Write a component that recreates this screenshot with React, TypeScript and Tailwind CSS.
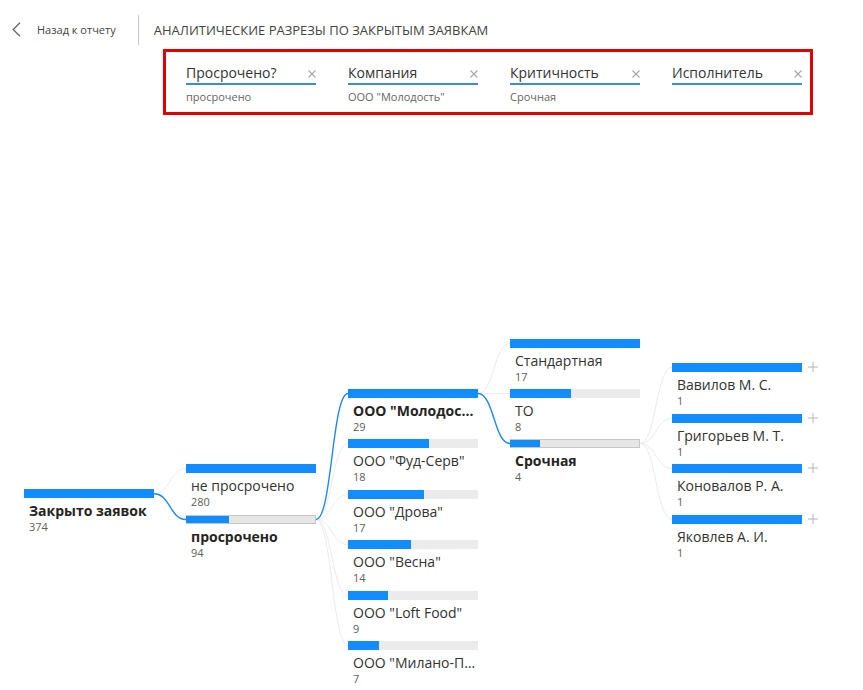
type TreeNode = { label: string; value: number }
type Level = { nodes: TreeNode[]; sel: number }

const COL_X = [24, 186, 348, 510, 672]
const BAR_W = 130
const STEP = 50.4
const TREE_TOP = 130
const ROOT_TOP = 489.3

const levels: Level[] = [
  { nodes: [{ label: 'Закрыто заявок', value: 374 }], sel: 0 },
  {
    nodes: [
      { label: 'не просрочено', value: 280 },
      { label: 'просрочено', value: 94 },
    ],
    sel: 1,
  },
  {
    nodes: [
      { label: 'ООО "Молодость"', value: 29 },
      { label: 'ООО "Фуд-Серв"', value: 18 },
      { label: 'ООО "Дрова"', value: 17 },
      { label: 'ООО "Весна"', value: 14 },
      { label: 'ООО "Loft Food"', value: 9 },
      { label: 'ООО "Милано-Пицца"', value: 7 },
    ],
    sel: 0,
  },
  {
    nodes: [
      { label: 'Стандартная', value: 17 },
      { label: 'ТО', value: 8 },
      { label: 'Срочная', value: 4 },
    ],
    sel: 2,
  },
  {
    nodes: [
      { label: 'Вавилов М. С.', value: 1 },
      { label: 'Григорьев М. Т.', value: 1 },
      { label: 'Коновалов Р. А.', value: 1 },
      { label: 'Яковлев А. И.', value: 1 },
    ],
    sel: -1,
  },
]

const filters = [
  { title: 'Просрочено?', value: 'просрочено' },
  { title: 'Компания', value: 'ООО "Молодость"' },
  { title: 'Критичность', value: 'Срочная' },
  { title: 'Исполнитель', value: '' },
]

// tops of every bar, relative to the tree area
const tops: number[][] = []
levels.forEach((lvl, i) => {
  if (i === 0) {
    tops.push([ROOT_TOP - TREE_TOP])
    return
  }
  const parentTop = tops[i - 1][levels[i - 1].sel]
  const n = lvl.nodes.length
  tops.push(lvl.nodes.map((_, j) => Math.round(parentTop + (j - (n - 1) / 2) * STEP)))
})

function Cross() {
  return (
    <svg width="8" height="8" viewBox="0 0 8 8" className="mt-[2px] shrink-0">
      <path d="M0.5 0.5 L7.5 7.5 M7.5 0.5 L0.5 7.5" stroke="#a6a6a6" strokeWidth="1.1" />
    </svg>
  )
}

function Connectors() {
  const paths: { d: string; blue: boolean }[] = []
  for (let i = 1; i < levels.length; i++) {
    const p = levels[i - 1]
    const x1 = COL_X[i - 1] + BAR_W
    const y1 = tops[i - 1][p.sel] + 4.5
    const x2 = COL_X[i]
    const mx = (x1 + x2) / 2
    levels[i].nodes.forEach((_, j) => {
      const y2 = tops[i][j] + 4.5
      paths.push({
        d: `M${x1} ${y1} C${mx} ${y1} ${mx} ${y2} ${x2} ${y2}`,
        blue: j === levels[i].sel,
      })
    })
  }
  return (
    <svg className="absolute left-0 top-0 pointer-events-none" width="863" height="560">
      {paths.filter((p) => !p.blue).map((p, k) => (
        <path key={`g${k}`} d={p.d} fill="none" stroke="#ebebeb" strokeWidth="1" />
      ))}
      {paths.filter((p) => p.blue).map((p, k) => (
        <path key={`b${k}`} d={p.d} fill="none" stroke="#1e88f0" strokeWidth="1.4" />
      ))}
    </svg>
  )
}

export default function App() {
  return (
    <div className="relative w-[863px] h-[690px] overflow-hidden bg-white font-['Open_Sans',sans-serif] text-[#252423]">
      {/* header */}
      <div className="h-[49px] pt-[10px] pl-[12px] flex items-center">
        <svg width="9" height="15" viewBox="0 0 9 15">
          <path d="M8 0.7 L1.2 7.5 L8 14.3" fill="none" stroke="#666" strokeWidth="1.3" />
        </svg>
        <span className="ml-[16px] text-[11px] leading-[16px] text-[#444]">Назад к отчету</span>
        <div className="ml-[22px] w-px h-[30px] bg-[#c8c8c8]" />
        <span className="ml-[15px] text-[13px] leading-[18px] text-[#444]">
          АНАЛИТИЧЕСКИЕ РАЗРЕЗЫ ПО ЗАКРЫТЫМ ЗАЯВКАМ
        </span>
      </div>

      {/* filters */}
      <div className="ml-[163px] w-[650px] h-[66px] border-[3px] border-[#e00000] flex gap-[32px] pl-[20px] pt-[11px]">
        {filters.map((f) => (
          <div key={f.title} className="w-[130px]">
            <div className="h-[22px] flex justify-between items-center border-b-2 border-[#3a8bd6]">
              <span className="text-[14px] leading-[20px] text-[#333]">{f.title}</span>
              <Cross />
            </div>
            <div className="mt-[4px] text-[11px] leading-[16px] text-[#666]">{f.value}</div>
          </div>
        ))}
      </div>

      {/* decomposition tree */}
      <div className="relative mt-[15px] h-[560px]">
        <Connectors />
        {levels.map((lvl, i) => {
          const max = Math.max(...lvl.nodes.map((n) => n.value))
          return lvl.nodes.map((n, j) => {
            const selected = j === lvl.sel
            const boxed = selected && i > 0 && n.value < max
            return (
              <div
                key={`${i}-${j}`}
                className="absolute w-[130px]"
                style={{ left: COL_X[i], top: tops[i][j] }}
              >
                <div
                  className={
                    boxed
                      ? 'h-[9px] bg-[#e6e6e6] border border-[#c6c6c6] border-l-0'
                      : 'h-[9px] bg-[#ebebeb]'
                  }
                >
                  <div className="h-full bg-[#118dff]" style={{ width: `${(n.value / max) * 100}%` }} />
                </div>
                {i === levels.length - 1 && (
                  <svg className="absolute left-[136px] top-[-1px]" width="10" height="10" viewBox="0 0 10 10">
                    <path d="M5 0 V10 M0 5 H10" stroke="#b4b4b4" strokeWidth="1" />
                  </svg>
                )}
                <div
                  className={`mt-[4px] pl-[5px] w-[130px] truncate text-[14px] leading-[18px] ${
                    selected ? 'font-bold text-[#252423]' : 'text-[#333]'
                  }`}
                >
                  {n.label}
                </div>
                <div className="pl-[5px] text-[11px] leading-[14px] text-[#605e5c]">{n.value}</div>
              </div>
            )
          })
        })}
      </div>
    </div>
  )
}
